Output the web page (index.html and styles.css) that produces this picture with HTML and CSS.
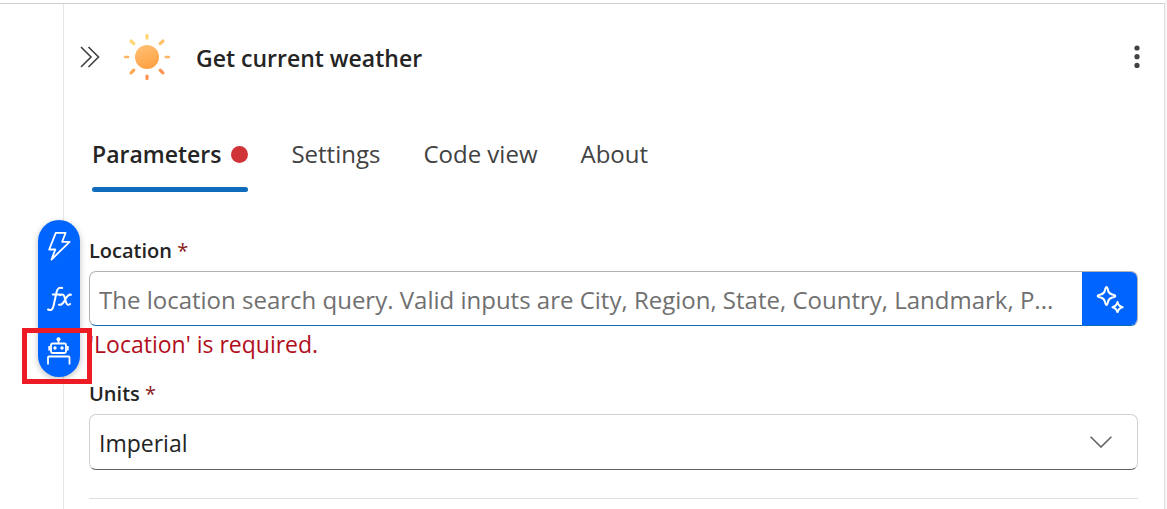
FILE: index.html
```
<!DOCTYPE html>
<html lang="en">
<head>
<meta charset="utf-8">
<meta name="viewport" content="width=device-width, initial-scale=1">
<title>Get current weather</title>
<link rel="stylesheet" href="styles.css">
</head>
<body>
<main class="panel">
  <header class="header">
    <button class="icon-button" type="button" aria-label="Collapse panel">
      <svg width="20" height="24" viewBox="0 0 20 24" fill="none" stroke="#424242" stroke-width="1.6"><path d="M1 2l10 10L1 22M8.500 2l10 10-10 10"/></svg>
    </button>
    <svg class="sun" width="48" height="48" viewBox="0 0 48 48" aria-hidden="true">
      <defs>
        <linearGradient id="core" x1="0" y1="0" x2="0.4" y2="1"><stop offset="0" stop-color="#ffc278"/><stop offset="1" stop-color="#ffa346"/></linearGradient>
      </defs>
      <circle cx="24" cy="24" r="12" fill="url(#core)"/>
      <g fill="none" stroke-width="3.200" stroke-linecap="round">
        <path stroke="#ffd773" d="M24 2.400v2.800M8 8l2.800 2.700"/>
        <path stroke="#ffc36d" d="M40 8l-2.800 2.700"/>
        <path stroke="#ffb566" stroke-width="2.600" d="M2.200 24h3M42.800 24h3"/>
        <path stroke="#ffa64f" d="M8.100 39.900l2.700-2.800"/>
        <path stroke="#ff9352" d="M39.900 39.900l-2.700-2.800M24 43v2.600"/>
      </g>
    </svg>
    <h1 class="title">Get current weather</h1>
    <button class="icon-button more" type="button" aria-label="More options">
      <svg width="6" height="24" viewBox="0 0 6 24" fill="#424242"><circle cx="3" cy="3" r="2.600"/><circle cx="3" cy="11.700" r="2.600"/><circle cx="3" cy="20.400" r="2.600"/></svg>
    </button>
  </header>

  <nav class="tabs" role="tablist">
    <button class="tab tab-active" type="button" role="tab" aria-selected="true">Parameters<span class="dot"></span></button>
    <button class="tab" type="button" role="tab">Settings</button>
    <button class="tab" type="button" role="tab">Code view</button>
    <button class="tab" type="button" role="tab">About</button>
  </nav>

  <form class="form">
    <label class="label" for="location">Location <span class="star">*</span></label>
    <div class="field field-location">
      <input class="input" id="location" type="text" aria-describedby="location-error" placeholder="The location search query. Valid inputs are City, Region, State, Country, Landmark, P...">
      <button class="generate" type="button" aria-label="Generate value">
        <svg width="28" height="28" viewBox="0 0 28 28" fill="none" stroke="#fff" stroke-width="2" stroke-linejoin="round"><path d="M10.500 2C11.300 2 11.500 3 12 5.200C12.600 8 13.500 8.900 16.300 9.500C18.500 10 19.300 10.200 19.300 11S18.500 12 16.300 12.500C13.500 13.100 12.600 14 12 16.800C11.500 19 11.300 20 10.500 20S9.500 19 9 16.800C8.400 14 7.500 13.100 4.700 12.500C2.500 12 1.700 11.800 1.700 11S2.500 10 4.700 9.500C7.500 8.900 8.400 8 9 5.200C9.500 3 9.700 2 10.500 2Z"/><path d="M21.500 17Q22.500 21.200 26.600 22.200Q22.500 23.200 21.500 27.200Q20.500 23.200 16.400 22.200Q20.500 21.200 21.500 17Z"/></svg>
      </button>
    </div>
    <p class="error" id="location-error">'Location' is required.</p>

    <label class="label" for="units">Units <span class="star">*</span></label>
    <div class="field field-units">
      <select class="select" id="units"><option>Imperial</option><option>Metric</option></select>
      <svg class="chevron" width="22" height="12" viewBox="0 0 22 12" fill="none" stroke="#616161" stroke-width="1.600" aria-hidden="true"><path d="M.6.800L11 11 21.400.800"/></svg>
    </div>
    <hr class="rule">
  </form>

  <div class="toolbar" role="toolbar" aria-label="Insert value">
    <button class="tool" type="button" aria-label="Insert dynamic content">
      <svg width="26" height="30" viewBox="0 0 26 30" fill="none" stroke="#fff" stroke-width="1.800" stroke-linejoin="round"><path d="M9.800 1.800H19.600L16.200 10.800H23.600L5.500 28.500L9.300 18.500H3.200Z"/></svg>
    </button>
    <button class="tool" type="button" aria-label="Insert expression">
      <svg width="28" height="28" viewBox="0 0 28 28" fill="none" stroke="#fff" stroke-width="2" stroke-linecap="round" stroke-linejoin="round"><path d="M3 25.500C6 27 7.700 25.500 8.500 22L11.600 8C12.500 4.200 14.200 3 17.200 4M7.800 10.500H15M15 11.200C17.500 9.700 18.800 10.600 19.500 13L21.100 18.500C21.800 20.800 23.200 21.400 25.100 20M26 10.700C23 10 22 12.500 20.300 15.500C18.500 18.800 17 21.500 14 20.700"/></svg>
    </button>
    <button class="tool" type="button" aria-label="Let the agent generate the value">
      <svg width="24" height="30" viewBox="0 0 24 30" fill="none" stroke="#fff" stroke-width="1.800"><path d="M11.500 4V9M1 29.500V22.500Q1 21.500 2 21.500H21.500Q22.500 21.500 22.500 22.500V29.500"/><circle cx="11.500" cy="4.200" r="2" fill="#fff" stroke="none"/><rect x="4" y="8.500" width="15" height="9.500" rx="1.500"/><path d="M2.200 11V15.500M20.800 11V15.500"/><g fill="#fff" stroke="none"><circle cx="8" cy="13" r="1.700"/><circle cx="15" cy="13" r="1.700"/></g></svg>
    </button>
    <span class="highlight"></span>
  </div>
</main>
</body>
</html>
```
FILE: styles.css
```
* {
  box-sizing: border-box;
}

body {
  margin: 0;
  padding-right: 2px;
  background: #f5f5f5;
  color: #242424;
  font-family: "Segoe UI", "Open Sans", "Noto Sans", sans-serif;
  font-size: 23px;
  overflow: hidden;
}

body::before {
  content: "";
  display: block;
  height: 3px;
  background: #fff;
  border-bottom: 1px solid #d1d1d1;
}

.panel {
  position: relative;
  min-height: 100vh;
  padding: 27px 26px 0 88px;
  border-right: 1px solid #e0e0e0;
  background: linear-gradient(#e5e5e5, #e5e5e5) 63px 0 / 1px 100% no-repeat #fff;
}

button {
  padding: 0;
  border: 0;
  background: none;
  color: inherit;
  font: inherit;
  cursor: pointer;
}

svg {
  display: block;
}

.header {
  display: flex;
  align-items: center;
  height: 52px;
  margin-left: -8px;
}

.sun {
  margin-left: 23px;
}

.title {
  margin: 0 0 0 25px;
  padding-top: 2px;
  font-size: 23px;
  font-weight: 600;
  line-height: 32px;
}

.more {
  margin-left: auto;
  margin-right: -2px;
}

.tabs {
  display: flex;
  gap: 43px;
  margin: 56px 4px 0;
}

.tab {
  display: flex;
  align-items: center;
  height: 53px;
  padding-bottom: 18px;
  border-bottom: 5px solid transparent;
  color: #424242;
  font-size: 24px;
  line-height: 30px;
}

.tab-active {
  position: relative;
  color: #242424;
  font-size: 23px;
  font-weight: 600;
}

.tab-active::after {
  content: "";
  position: absolute;
  right: 0;
  bottom: -5px;
  left: 0;
  height: 5px;
  border-radius: 3px;
  background: #0f6cbd;
}

.dot {
  width: 17px;
  height: 17px;
  margin-left: 10px;
  border-radius: 50%;
  background: #d13438;
}

.form {
  display: flex;
  flex-direction: column;
  margin: 45px 0 0 1px;
}

.label {
  height: 34px;
  font-size: 20px;
  font-weight: 600;
  line-height: 28px;
}

.star {
  color: #8b1a1a;
  font-weight: 400;
}

.field {
  display: flex;
  height: 56px;
  border: 1px solid #d1d1d1;
  border-bottom-color: #616161;
  border-radius: 7px;
  overflow: hidden;
}

.field-location {
  height: 55px;
  border-color: #b3b3b3;
  border-bottom-color: #0f6cbd;
}

.input,
.select {
  flex: 1;
  min-width: 0;
  padding: 2px 0 0 9px;
  border: 0;
  outline: 0;
  background: transparent;
  color: #242424;
  font: inherit;
}

.input {
  font-size: 24px;
}

.input::placeholder {
  color: #707070;
  opacity: 1;
}

.select {
  appearance: none;
}

.generate {
  display: grid;
  place-items: center;
  width: 56px;
  margin: -1px -1px -1px 0;
  background: #0064ff;
}

.field-units {
  align-items: center;
}

.chevron {
  margin-right: 25px;
  pointer-events: none;
}

.error {
  margin: 2px 0 19px;
  color: #b10e1c;
  line-height: 33px;
}

.rule {
  width: 100%;
  margin: 28px 0 0;
  border: 0;
  border-top: 1px solid #e0e0e0;
}

.toolbar {
  position: absolute;
  top: 216px;
  left: 38px;
  display: flex;
  flex-direction: column;
  width: 42px;
  padding-bottom: 1px;
  border-radius: 21px;
  background: #0064ff;
  box-shadow: 0 2px 6px rgba(0, 0, 0, 0.25);
}

.tool {
  display: grid;
  place-items: center;
  height: 52px;
}

.highlight {
  position: absolute;
  right: -12px;
  bottom: -7px;
  left: -16px;
  height: 56px;
  border: 5px solid #ed1c24;
  pointer-events: none;
}
```
